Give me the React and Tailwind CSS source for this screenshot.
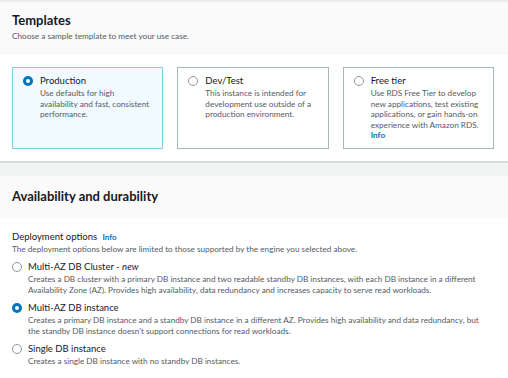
import React from 'react'

// Radio dot, AWS style
function Radio({ checked }) {
  if (checked) {
    return (
      <span className="flex size-[10px] shrink-0 items-center justify-center rounded-full bg-[#0073bb]">
        <span className="block size-[4px] rounded-full bg-white" />
      </span>
    )
  }
  return <span className="block size-[10px] shrink-0 rounded-full border border-[#8d9999] bg-white" />
}

function TemplateCard({ title, lines, checked, info }) {
  return (
    <div
      className={
        checked
          ? 'flex h-[82px] gap-[7px] border border-[#7fd0e4] bg-[#f1faff] pl-[10px] pr-2 pt-[7px]'
          : 'flex h-[82px] gap-[7px] border border-[#aab7b8] bg-white pl-[10px] pr-2 pt-[7px]'
      }
    >
      <div className="pt-[1px]">
        <Radio checked={checked} />
      </div>
      <div>
        <p className="text-[9.5px] leading-[12px] text-[#16191f]">{title}</p>
        <div className="mt-[1px] text-[8.2px] leading-[10.5px] text-[#545b64]">
          {lines.map((l) => (
            <p key={l}>{l}</p>
          ))}
          {info && <p className="font-bold text-[#0073bb]">Info</p>}
        </div>
      </div>
    </div>
  )
}

function DeployOption({ title, italic, lines, checked }) {
  return (
    <div className="flex gap-[6px]">
      <div className="pt-[1px]">
        <Radio checked={checked} />
      </div>
      <div>
        <p className="text-[9.5px] leading-[12px] text-[#16191f]">
          {title}
          {italic && <i>{italic}</i>}
        </p>
        <div className="mt-[1px] text-[8.2px] leading-[11px] text-[#545b64]">
          {lines.map((l) => (
            <p key={l}>{l}</p>
          ))}
        </div>
      </div>
    </div>
  )
}

export default function App() {
  return (
    <div className="h-[378px] w-[508px] overflow-hidden bg-white font-['Lato','Open_Sans',sans-serif]">
      {/* Templates */}
      <div className="h-[55px] border-t-2 border-[#eaeded] bg-[#fafafa] px-3 pt-[10px]">
        <h2 className="text-[13px] font-bold leading-[16px] text-[#16191f]">Templates</h2>
        <p className="mt-[3px] text-[8.2px] leading-[10px] text-[#545b64]">
          Choose a sample template to meet your use case.
        </p>
      </div>

      <div className="grid grid-cols-3 gap-[14px] pl-3 pr-[14px] pt-[12px]">
        <TemplateCard
          checked
          title="Production"
          lines={['Use defaults for high', 'availability and fast, consistent', 'performance.']}
        />
        <TemplateCard
          title="Dev/Test"
          lines={['This instance is intended for', 'development use outside of a', 'production environment.']}
        />
        <TemplateCard
          info
          title="Free tier"
          lines={[
            'Use RDS Free Tier to develop',
            'new applications, test existing',
            'applications, or gain hands-on',
            'experience with Amazon RDS.',
          ]}
        />
      </div>

      {/* Availability and durability */}
      <div className="mt-[12px] h-[15px] border-t-2 border-[#d5dbdb] bg-[#f2f3f3]" />
      <div className="flex h-[42px] items-center bg-[#fafafa] px-3">
        <h2 className="text-[13px] font-bold text-[#16191f]">Availability and durability</h2>
      </div>

      <div className="px-3 pt-[13px]">
        <p className="text-[9.5px] leading-[12px] text-[#16191f]">
          Deployment options <span className="ml-[3px] text-[8px] font-bold text-[#0073bb]">Info</span>
        </p>
        <p className="text-[8.2px] leading-[12px] text-[#545b64]">
          The deployment options below are limited to those supported by the engine you selected above.
        </p>

        <div className="mt-[6px] flex flex-col gap-[6px]">
          <DeployOption
            title="Multi-AZ DB Cluster - "
            italic="new"
            lines={[
              'Creates a DB cluster with a primary DB instance and two readable standby DB instances, with each DB instance in a different',
              'Availability Zone (AZ). Provides high availability, data redundancy and increases capacity to serve read workloads.',
            ]}
          />
          <DeployOption
            checked
            title="Multi-AZ DB instance"
            lines={[
              'Creates a primary DB instance and a standby DB instance in a different AZ. Provides high availability and data redundancy, but',
              "the standby DB instance doesn't support connections for read workloads.",
            ]}
          />
          <DeployOption
            title="Single DB instance"
            lines={['Creates a single DB instance with no standby DB instances.']}
          />
        </div>
      </div>
    </div>
  )
}
